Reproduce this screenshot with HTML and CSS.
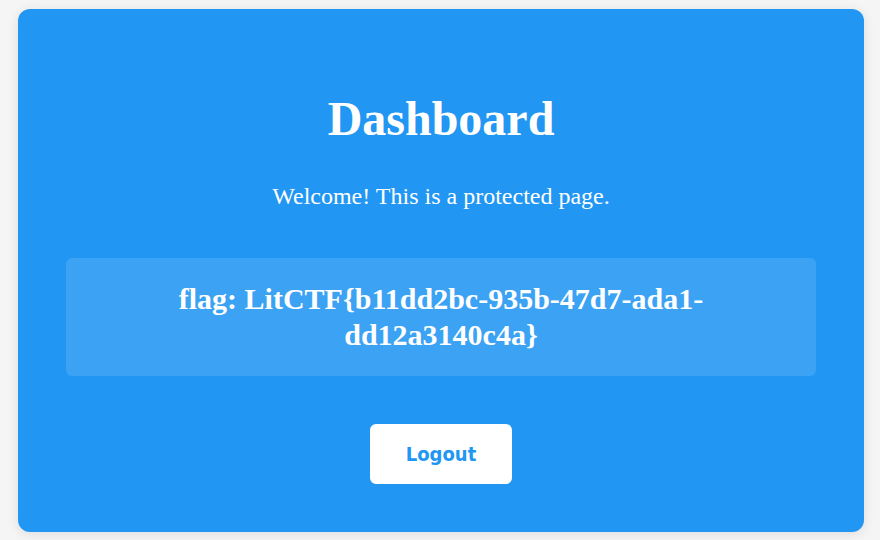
FILE: index.html
```html
<!DOCTYPE html>
<html>
<head>
<meta charset="utf-8">
<link rel="stylesheet" href="styles.css">
</head>
<body>
<div class="card">
  <h1 class="title">Dashboard</h1>
  <p class="welcome">Welcome! This is a protected page.</p>
  <div class="flag">flag: LitCTF{b11dd2bc-935b-47d7-ada1-dd12a3140c4a}</div>
  <button class="logout">Logout</button>
</div>
</body>
</html>
```
FILE: styles.css
```css
html, body {
  margin: 0;
  background: #f5f5f5;
}
body {
  padding: 9px 16px 8px 18px;
  font-family: "Liberation Serif", serif;
}
.card {
  width: 846px;
  height: 523px;
  box-sizing: border-box;
  background: #2196f3;
  border-radius: 12px;
  box-shadow: 0 2px 12px rgba(0,0,0,0.1);
  padding: 48px;
  color: #fff;
  text-align: center;
  display: flex;
  flex-direction: column;
  align-items: center;
}
.title {
  font-size: 48px;
  font-weight: bold;
  margin: 34px 0 0;
  line-height: normal;
}
.welcome {
  font-size: 24px;
  margin: 37px 0 0;
  line-height: normal;
}
.flag {
  align-self: stretch;
  margin-top: 48px;
  background: rgba(255,255,255,0.12);
  border-radius: 6px;
  padding: 23px 24px;
  font-size: 30px;
  font-weight: bold;
  line-height: 36px;
}
.logout {
  margin-top: 48px;
  background: #fff;
  color: #2196f3;
  border: none;
  border-radius: 6px;
  width: 142px;
  height: 60px;
  padding: 0;
  font-family: "DejaVu Sans Condensed", "DejaVu Sans", sans-serif;
  font-stretch: condensed;
  font-size: 20px;
  font-weight: bold;
  line-height: 24px;
}
```
